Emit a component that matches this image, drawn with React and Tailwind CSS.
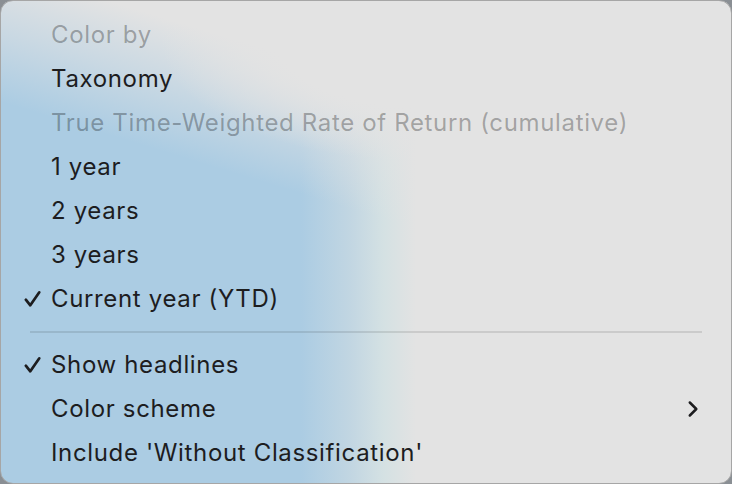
import React from "react";

const Check = () => (
  <svg width="19" height="19" viewBox="0 0 19 19" className="absolute left-[22px] top-1/2 -translate-y-1/2">
    <path d="M2.8 10.2 L7.3 15.8 L16.3 2.8" fill="none" stroke="#1d1d1f" strokeWidth="2.7" strokeLinecap="round" strokeLinejoin="round" />
  </svg>
);

const Chevron = () => (
  <svg width="12" height="18" viewBox="0 0 12 18" className="absolute right-[32px] top-1/2 -translate-y-1/2">
    <path d="M2.8 2.5 L9.3 9 L2.8 15.5" fill="none" stroke="#1d1d1f" strokeWidth="2.5" strokeLinecap="round" strokeLinejoin="round" />
  </svg>
);

const Item = ({ label, disabled, checked, submenu }) => (
  <div
    className={`relative h-[44px] flex items-center pl-[50px] text-[24px] tracking-[0.65px] ${
      disabled ? "text-black/30" : "text-[#1d1d1f]"
    }`}
  >
    {checked && <Check />}
    <span>{label}</span>
    {submenu && <Chevron />}
  </div>
);

export default function App() {
  return (
    <div className="w-[732px] h-[484px] bg-[#8a8f94] font-['Inter',sans-serif]">
      <div className="w-full h-full rounded-[13px] border border-[#a6a6a6] overflow-hidden bg-[radial-gradient(ellipse_260px_120px_at_420px_40px,#e3e3e3_55%,rgba(227,227,227,0)_100%),linear-gradient(197deg,#e3e3e3_27%,rgba(227,227,227,0.55)_36%,rgba(227,227,227,0)_46%),linear-gradient(to_right,#abcce3_300px,#c2d6e2_350px,#d4e1e3_382px,#e3e3e3_415px)] pt-[12px]">
        <Item label="Color by" disabled />
        <Item label="Taxonomy" />
        <Item label="True Time-Weighted Rate of Return (cumulative)" disabled />
        <Item label="1 year" />
        <Item label="2 years" />
        <Item label="3 years" />
        <Item label="Current year (YTD)" checked />
        <div className="h-[22px] flex items-center px-[29px]">
          <div className="w-full h-[1.5px] bg-black/10" />
        </div>
        <Item label="Show headlines" checked />
        <Item label="Color scheme" submenu />
        <Item label="Include 'Without Classification'" />
      </div>
    </div>
  );
}
